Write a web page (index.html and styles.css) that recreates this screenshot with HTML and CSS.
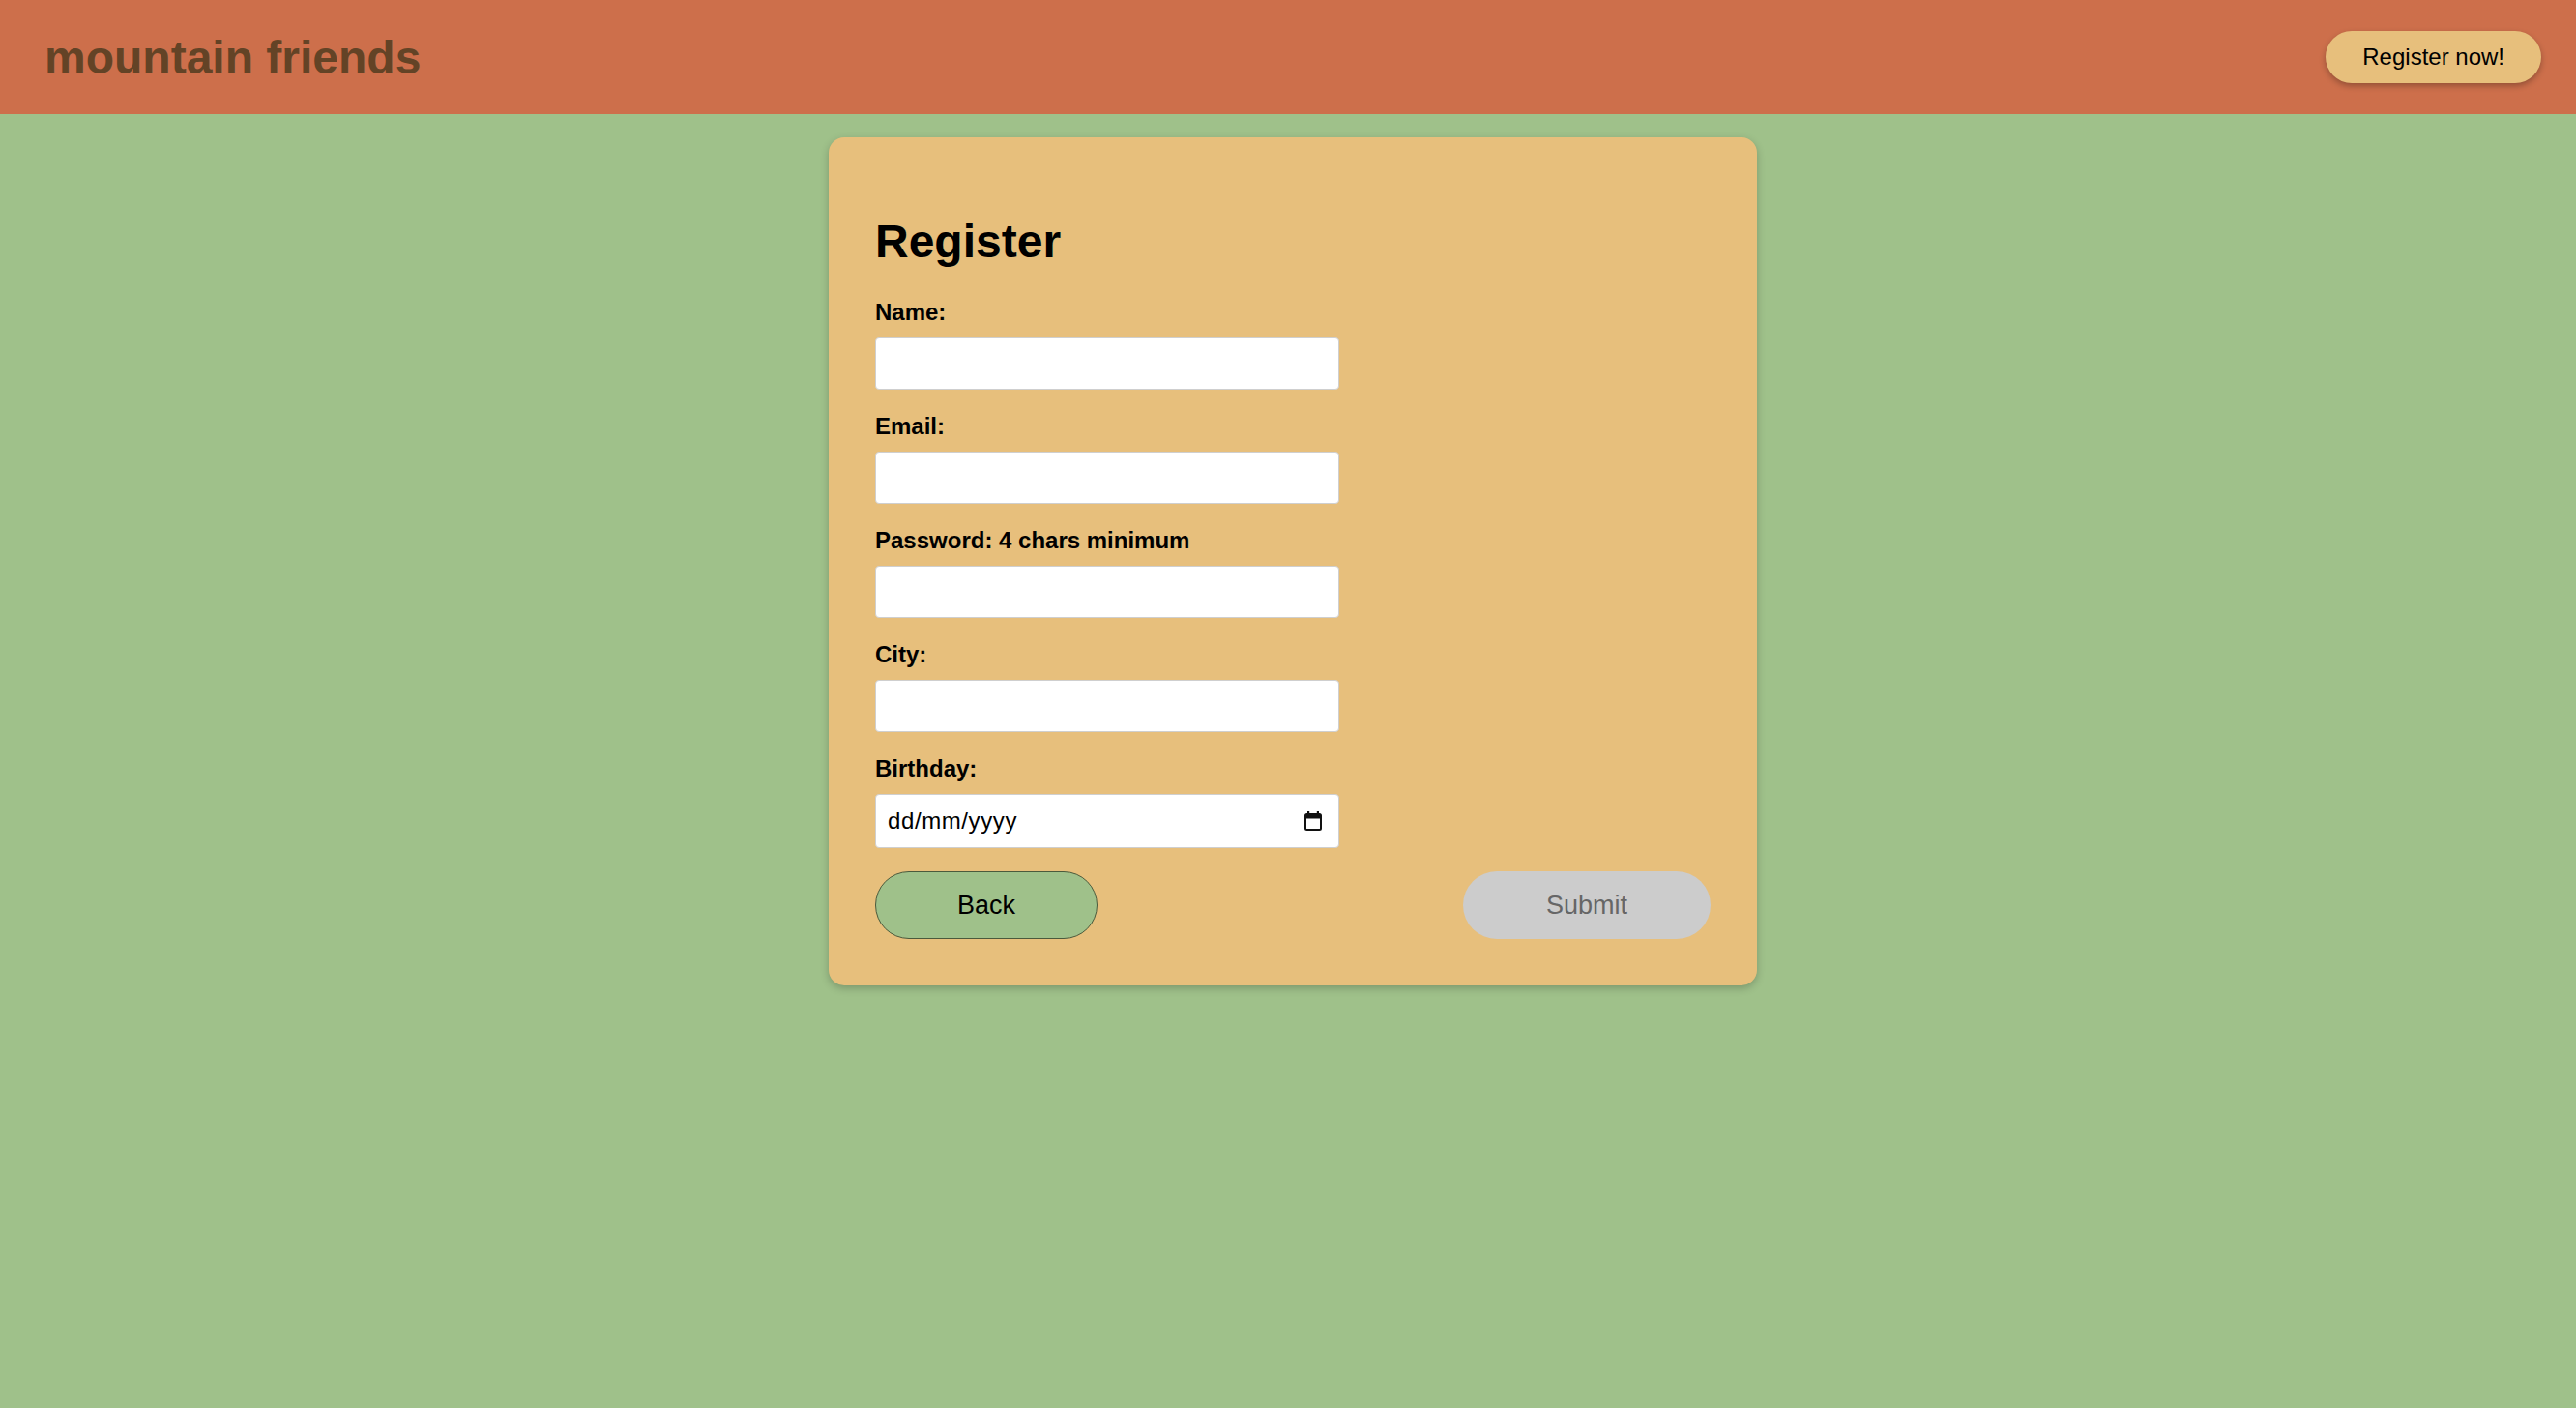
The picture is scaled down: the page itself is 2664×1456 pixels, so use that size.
FILE: index.html
```html
<!DOCTYPE html>
<html lang="en">
<head>
<meta charset="utf-8">
<title>mountain friends</title>
<link rel="stylesheet" href="styles.css">
</head>
<body>
<header class="topbar">
  <div class="brand">mountain friends</div>
  <button class="cta" type="button">Register now!</button>
</header>
<main class="main">
  <form class="card">
    <h1 class="card-title">Register</h1>
    <label class="field-label" for="name">Name:</label>
    <input class="field-input" id="name" type="text">
    <label class="field-label" for="email">Email:</label>
    <input class="field-input" id="email" type="text">
    <label class="field-label" for="password">Password: 4 chars minimum</label>
    <input class="field-input" id="password" type="password">
    <label class="field-label" for="city">City:</label>
    <input class="field-input" id="city" type="text">
    <label class="field-label">Birthday:</label>
    <div class="date-input">
      <span class="date-text">dd/mm/yyyy</span>
      <svg class="cal-icon" width="20" height="20" viewBox="0 0 20 20" aria-hidden="true">
        <rect x="4" y="0" width="2.2" height="4" fill="#111"/>
        <rect x="13.8" y="0" width="2.2" height="4" fill="#111"/>
        <rect x="2" y="3" width="16" height="16" rx="1.5" fill="none" stroke="#111" stroke-width="2"/>
        <rect x="2" y="3" width="16" height="4.5" fill="#111"/>
      </svg>
    </div>
    <div class="actions">
      <button class="btn btn-back" type="button">Back</button>
      <button class="btn btn-submit" type="button" disabled>Submit</button>
    </div>
  </form>
</main>
</body>
</html>
```
FILE: styles.css
```css
html, body {
  margin: 0;
  padding: 0;
}
body {
  background: #9fc18a;
  font-family: "Liberation Sans", Arial, sans-serif;
  color: #000;
  min-height: 1456px;
}
.topbar {
  height: 118px;
  background: #cd6f4b;
  display: flex;
  align-items: center;
  justify-content: space-between;
  padding: 0 36px 0 46px;
  box-sizing: border-box;
}
.brand {
  font-size: 48px;
  font-weight: bold;
  color: #634326;
  line-height: normal;
}
.cta {
  font-family: "Liberation Sans", Arial, sans-serif;
  font-size: 24px;
  color: #000;
  background: #e7bf7c;
  border: none;
  border-radius: 27px;
  height: 54px;
  padding: 0 38px;
  box-shadow: 0 3px 6px rgba(0, 0, 0, 0.28);
  margin-top: 0;
}
.main {
  display: flex;
  justify-content: center;
  padding-left: 10px;
  padding-top: 24px;
}
.card {
  width: 960px;
  box-sizing: border-box;
  background: #e7bf7c;
  border-radius: 16px;
  padding: 48px;
  display: flex;
  flex-direction: column;
  align-items: flex-start;
  box-shadow: 0 3px 8px rgba(0, 0, 0, 0.22);
}
.card-title {
  font-size: 48px;
  font-weight: bold;
  margin: 32px 0 32px 0;
  line-height: normal;
}
.field-label {
  display: block;
  font-size: 24px;
  font-weight: bold;
  line-height: normal;
  margin-bottom: 12px;
}
.field-input {
  display: block;
  width: 480px;
  height: 54px;
  box-sizing: border-box;
  border: 1px solid #cfcfcf;
  border-radius: 4px;
  background: #fff;
  margin: 0 0 24px 0;
  padding: 0 12px;
  font-size: 24px;
  font-family: "Liberation Sans", Arial, sans-serif;
}
.date-input {
  width: 480px;
  height: 56px;
  box-sizing: border-box;
  border: 1px solid #cfcfcf;
  border-radius: 4px;
  background: #fff;
  margin: 0 0 24px 0;
  padding: 0 16px 0 12px;
  display: flex;
  align-items: center;
  justify-content: space-between;
}
.date-text {
  font-size: 24px;
  letter-spacing: 0.6px;
  color: #000;
}
.cal-icon {
  display: block;
}
.actions {
  width: 100%;
  display: flex;
  justify-content: space-between;
  align-items: center;
}
.btn {
  font-family: "Liberation Sans", Arial, sans-serif;
  font-size: 27px;
  height: 70px;
  border-radius: 35px;
  box-sizing: border-box;
  padding: 0;
}
.btn-back {
  width: 230px;
  background: #9fc18a;
  border: 1px solid #4b5a3c;
  color: #000;
}
.btn-submit {
  width: 256px;
  background: #cccccc;
  border: none;
  color: #666;
}
```
